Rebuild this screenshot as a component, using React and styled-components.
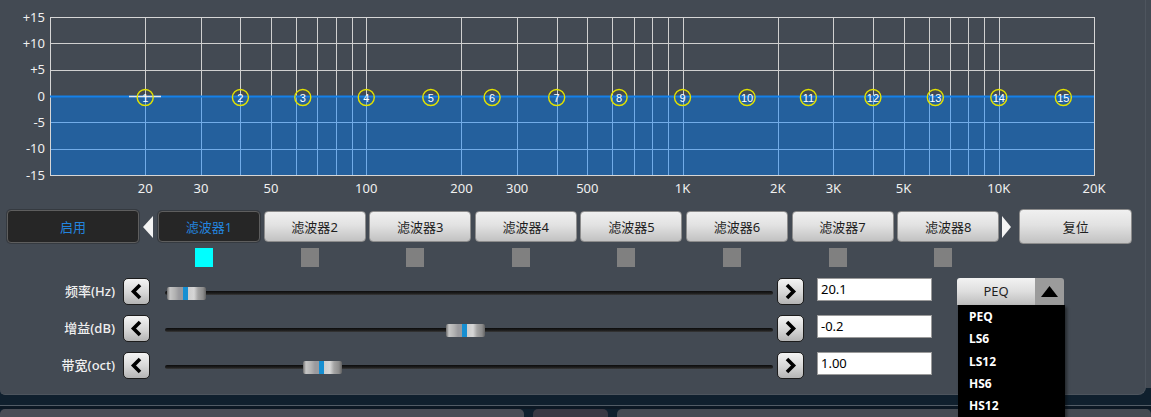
import React from "react";
import styled, { createGlobalStyle } from "styled-components";

const GlobalStyle = createGlobalStyle`
  html, body {
    margin: 0;
    padding: 0;
    overflow: hidden;
    background: #10202e;
  }
  body {
    font-family: "Noto Sans", "Noto Sans CJK SC", sans-serif;
  }
`;

// chart scale: 10Hz .. 20kHz log, -15 .. +15 dB
const X0 = 50;
const X1 = 1094;
const Y_TOP = 17;
const Y_BOT = 175;
const PX_DECADE = (X1 - X0) / Math.log10(2000);
const xOf = (f) => X0 + PX_DECADE * Math.log10(f / 10);
const yOf = (db) => 96 - db * ((Y_BOT - Y_TOP) / 30);

const gridFreqs = [];
[10, 100, 1000].forEach((dec) => {
  for (let i = 1; i < 10; i++) {
    if (dec * i > 10) gridFreqs.push(dec * i);
  }
});
gridFreqs.push(10000);

const freqLabels = [
  [20, "20"], [30, "30"], [50, "50"], [100, "100"], [200, "200"], [300, "300"],
  [500, "500"], [1000, "1K"], [2000, "2K"], [3000, "3K"], [5000, "5K"],
  [10000, "10K"], [20000, "20K"],
];
const dbLabels = [15, 10, 5, 0, -5, -10, -15];
const bands = [20, 40, 63, 100, 160, 250, 400, 630, 1000, 1600, 2500, 4000, 6300, 10000, 16000];

const filters = [1, 2, 3, 4, 5, 6, 7, 8];
const filterTypes = ["PEQ", "LS6", "LS12", "HS6", "HS12"];

const Screen = styled.div`
  width: 1151px;
  height: 417px;
  overflow: hidden;
  display: flex;
  flex-direction: column;
  background: #10202e;
`;

const Top = styled.div`
  display: flex;
  height: 395px;
`;

const Panel = styled.div`
  position: relative;
  width: 1146px;
  height: 395px;
  box-sizing: border-box;
  background: #434a53;
  border-right: 1px solid #4e555e;
  border-bottom: 1px solid #4e555e;
  border-radius: 0 0 8px 5px;
`;

const Gutter = styled.div`
  width: 5px;
  height: 388px;
  background: #434a53;
`;

const ChartSvg = styled.svg`
  display: block;
  font-family: "Noto Sans", sans-serif;
`;

const Toolbar = styled.div`
  display: flex;
  align-items: center;
  height: 35px;
  margin-top: 9px;
  padding-left: 7px;
`;

const Button = styled.button`
  box-sizing: border-box;
  width: ${(p) => p.$w || 102}px;
  height: ${(p) => p.$h || 31}px;
  margin: 0;
  padding: 0;
  border-radius: 4px;
  font-family: "Noto Sans", "Noto Sans CJK SC", sans-serif;
  font-size: 13px;
  cursor: pointer;
  border: 1px solid ${(p) => (p.$dark ? "#5e5e5e" : "#8c8c8c")};
  color: ${(p) => (p.$dark ? "#2384de" : "#1e1e1e")};
  background: ${(p) =>
    p.$dark ? "#262626" : "linear-gradient(#f0f0f0, #e2e2e2 45%, #c2c2c2)"};
  box-shadow: ${(p) => (p.$dark ? "0 0 0 1px #353a40" : "none")};
`;

const Tabs = styled.div`
  display: flex;
  gap: 3.6px;
`;

const Arrow = styled.div`
  width: 0;
  height: 0;
  border-top: 11px solid transparent;
  border-bottom: 11px solid transparent;
  ${(p) =>
    p.$dir === "left"
      ? "border-right: 10px solid #f4f4f4; margin: 0 5px 0 4px;"
      : "border-left: 9px solid #f4f4f4; margin: 0 8px 0 3px;"}
`;

const IndicatorRow = styled.div`
  display: flex;
  gap: 3.6px;
  margin-top: 4px;
  padding-left: 158px;
  height: 19px;
`;

const IndicatorCell = styled.div`
  width: 102px;
  padding-left: 37px;
  box-sizing: border-box;
`;

const Indicator = styled.div`
  width: 18px;
  height: 19px;
  background: ${(p) => (p.$on ? "#00ffff" : "#808080")};
`;

const Controls = styled.div`
  display: flex;
  flex-direction: column;
  gap: 10px;
  margin-top: 11px;
`;

const Row = styled.div`
  display: flex;
  align-items: flex-start;
  height: 27px;
`;

const Label = styled.div`
  width: 115px;
  margin-right: 8px;
  text-align: right;
  line-height: 27px;
  font-size: 13px;
  font-weight: 500;
  color: #f0f0f0;
`;

const StepButton = styled.div`
  box-sizing: border-box;
  width: 27px;
  height: 27px;
  display: flex;
  align-items: center;
  justify-content: center;
  border: 1px solid #1c1c1c;
  border-radius: 5px;
  background: linear-gradient(#f4f4f4, #d6d6d6 55%, #b4b4b4);
`;

const Track = styled.div`
  position: relative;
  width: 608px;
  height: 27px;
  margin: 0 4px 0 15px;
`;

const Rail = styled.div`
  margin-top: 13px;
  height: 4px;
  border-radius: 2px;
  background: linear-gradient(#0c0c0c, #1e1e1e 60%, #3a3a3a);
`;

const Thumb = styled.div`
  position: absolute;
  top: 9px;
  width: 39px;
  height: 13px;
  border-radius: 2px;
  background: linear-gradient(
    to right,
    #6e6e6e 0,
    #c6c6c6 3px,
    #b2b2b2 8px,
    #9a9a9e 12px,
    #9a9a9e 16px,
    #168fd2 16px,
    #168fd2 21px,
    #cdcdcd 21px,
    #d6d6d6 27px,
    #a4a4a4 31px,
    #8c8c8c 36px,
    #626262 39px
  );
`;

const ValueBox = styled.div`
  box-sizing: border-box;
  width: 115px;
  height: 23px;
  margin-left: 13px;
  padding: 0 3px;
  border: 1px solid #9a9a9a;
  background: #fff;
  color: #000;
  font-size: 13px;
  line-height: 21px;
`;

const Select = styled.div`
  position: relative;
  display: flex;
  width: 107px;
  height: 27px;
  margin-left: 25px;
  border-radius: 3px 3px 0 0;
`;

const SelectValue = styled.div`
  flex: 1;
  text-align: center;
  line-height: 27px;
  font-size: 13px;
  color: #1e1e1e;
  border-radius: 3px 0 0 0;
  background: linear-gradient(#f2f2f2, #dedede 50%, #bdbdbd);
`;

const SelectToggle = styled.div`
  width: 29px;
  display: flex;
  align-items: center;
  justify-content: center;
  border-radius: 0 3px 0 0;
  background: #9b9b9b;
`;

const Menu = styled.div`
  position: absolute;
  top: 27px;
  left: 1px;
  width: 107px;
  padding-top: 1px;
  background: #000;
  box-shadow: 2px 2px 3px rgba(0, 0, 0, 0.45);
  z-index: 2;
`;

const MenuItem = styled.div`
  height: 22.3px;
  line-height: 22px;
  padding-left: 11px;
  color: #fff;
  font-size: 12px;
  font-weight: 700;
`;

const Band = styled.div`
  height: 10px;
  background: #10202e;
  border-bottom: 1px solid #525c66;
`;

const BandDark = styled.div`
  height: 3px;
  background: #0c1824;
`;

const BottomTabs = styled.div`
  display: flex;
  gap: 9px;
  height: 8px;
`;

const BottomTab = styled.div`
  width: ${(p) => (p.$w ? `${p.$w}px` : "auto")};
  flex: ${(p) => (p.$w ? "none" : 1)};
  border-radius: 5px 5px 0 0;
  background: ${(p) => p.$bg};
`;

const Chevron = ({ dir }) => (
  <svg width="13" height="17" viewBox="0 0 13 17">
    <path
      d={dir === "left" ? "M10 2 L3.5 8.5 L10 15" : "M3 2 L9.5 8.5 L3 15"}
      fill="none"
      stroke="#000"
      strokeWidth="3.6"
    />
  </svg>
);

const Chart = () => (
  <ChartSvg width="1120" height="200">
    <rect x={X0} y={96} width={X1 - X0} height={Y_BOT - 96} fill="#24609d" />
    {gridFreqs.map((f) => {
      const x = Math.round(xOf(f)) + 0.5;
      return (
        <g key={f}>
          <line x1={x} x2={x} y1={Y_TOP} y2={96} stroke="#d0d0d0" />
          <line x1={x} x2={x} y1={96} y2={Y_BOT} stroke="#72ace8" />
        </g>
      );
    })}
    {[10, 5].map((d) => (
      <line key={d} x1={X0} x2={X1} y1={Math.round(yOf(d)) + 0.5} y2={Math.round(yOf(d)) + 0.5} stroke="#d0d0d0" />
    ))}
    {[-5, -10].map((d) => (
      <line key={d} x1={X0} x2={X1} y1={Math.round(yOf(d)) + 0.5} y2={Math.round(yOf(d)) + 0.5} stroke="#72ace8" />
    ))}
    <rect x={X0 + 0.5} y={Y_TOP + 0.5} width={X1 - X0} height={Y_BOT - Y_TOP} fill="none" stroke="#d6d6d6" />
    <line x1={X0} x2={X1} y1={96.5} y2={96.5} stroke="#1580e8" strokeWidth="2" />
    {dbLabels.map((d) => (
      <text key={d} x="45" y={yOf(d) + 4.5} fontSize="13" fill="#f0f0f0" textAnchor="end">
        {d > 0 ? `+${d}` : d}
      </text>
    ))}
    {freqLabels.map(([f, t]) => (
      <text key={f} x={xOf(f)} y="192.5" fontSize="13" fill="#f0f0f0" textAnchor="middle">
        {t}
      </text>
    ))}
    <line x1="129" x2="161" y1="96.5" y2="96.5" stroke="#e6e6e6" strokeWidth="1.5" />
    {bands.map((f, i) => (
      <g key={f} transform={`translate(${xOf(f)}, 97.5)`}>
        <circle r="8" fill="none" stroke="#e2e200" strokeWidth="1.4" />
        <text y="4" fontSize="11" fill="#fff" textAnchor="middle" fontFamily="Liberation Sans, sans-serif">
          {i + 1}
        </text>
      </g>
    ))}
  </ChartSvg>
);

const sliders = [
  { label: "频率(Hz)", value: "20.1", pos: 0.002 },
  { label: "增益(dB)", value: "-0.2", pos: (-0.2 + 15) / 30 },
  { label: "带宽(oct)", value: "1.00", pos: (1 - 0.05) / 3.95 },
];

const App = () => {
  return (
    <Screen>
      <GlobalStyle />
      <Top>
        <Panel>
          <Chart />
          <Toolbar>
            <Button $dark $w={132} $h={33}>启用</Button>
            <Arrow $dir="left" />
            <Tabs>
              {filters.map((n) => (
                <Button key={n} $dark={n === 1}>
                  滤波器{n}
                </Button>
              ))}
            </Tabs>
            <Arrow $dir="right" />
            <Button $w={113} $h={35}>复位</Button>
          </Toolbar>
          <IndicatorRow>
            {filters.map((n) => (
              <IndicatorCell key={n}>
                <Indicator $on={n === 1} />
              </IndicatorCell>
            ))}
          </IndicatorRow>
          <Controls>
            {sliders.map((s, i) => (
              <Row key={s.label}>
                <Label>{s.label}</Label>
                <StepButton>
                  <Chevron dir="left" />
                </StepButton>
                <Track>
                  <Rail />
                  <Thumb style={{ left: 1 + s.pos * 568 }} />
                </Track>
                <StepButton>
                  <Chevron dir="right" />
                </StepButton>
                <ValueBox>{s.value}</ValueBox>
                {i === 0 && (
                  <Select>
                    <SelectValue>PEQ</SelectValue>
                    <SelectToggle>
                      <svg width="17" height="11" viewBox="0 0 17 11">
                        <polygon points="8.5,0 17,11 0,11" fill="#000" />
                      </svg>
                    </SelectToggle>
                    <Menu>
                      {filterTypes.map((t) => (
                        <MenuItem key={t}>{t}</MenuItem>
                      ))}
                    </Menu>
                  </Select>
                )}
              </Row>
            ))}
          </Controls>
        </Panel>
        <Gutter />
      </Top>
      <Band />
      <BandDark />
      <BottomTabs>
        <BottomTab $w={524} $bg="#4a4d56" />
        <BottomTab $w={75} $bg="#3a3944" />
        <BottomTab $bg="#454a52" />
      </BottomTabs>
    </Screen>
  );
};

export default App;
